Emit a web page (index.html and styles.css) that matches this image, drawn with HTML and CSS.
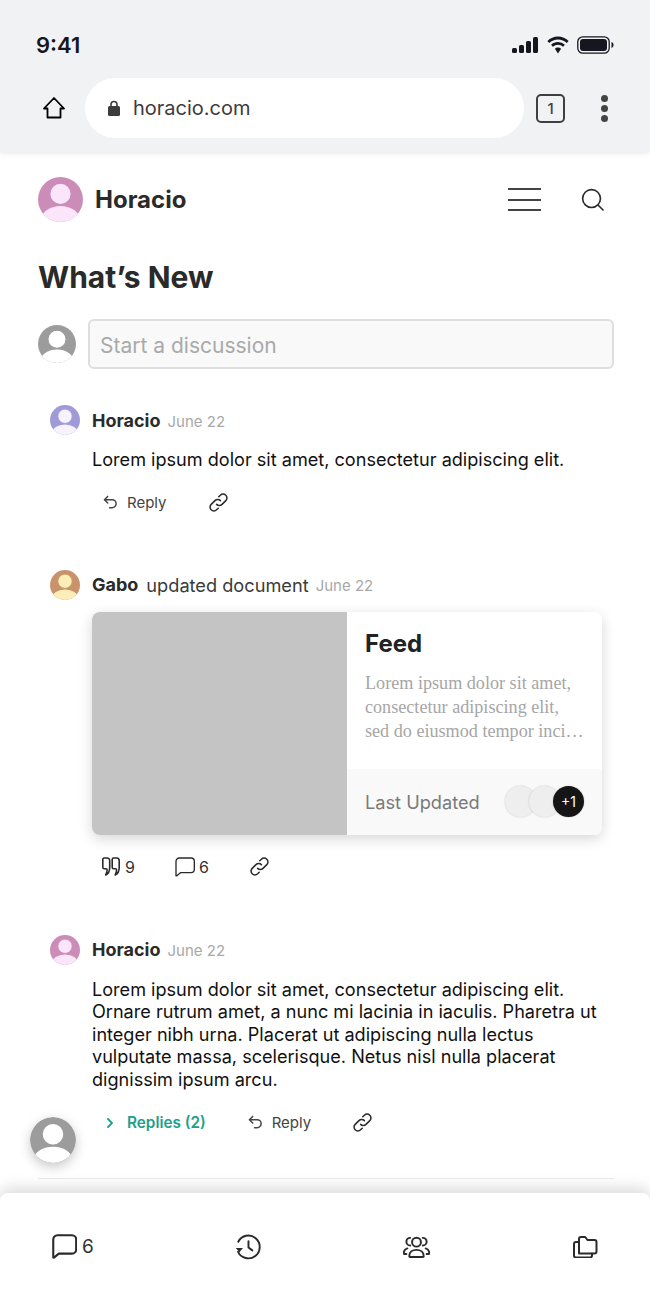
FILE: index.html
```html
<!DOCTYPE html>
<html lang="en">
<head>
    <meta charset="UTF-8">
    <meta name="viewport" content="width=device-width, initial-scale=1.0">
    <title>What's New</title>
    <link rel="stylesheet" href="styles.css">
</head>
<body>
    <svg class="defs" width="0" height="0">
        <defs>
            <clipPath id="avClip"><circle cx="24" cy="24" r="24"/></clipPath>
            <symbol id="avatar" viewBox="0 0 48 48">
                <g clip-path="url(#avClip)">
                    <rect width="48" height="48" style="fill: var(--av-bg)"/>
                    <ellipse cx="24" cy="46" rx="21" ry="15" style="fill: var(--av-fg)"/>
                    <circle cx="24" cy="18" r="11.500" style="fill: var(--av-fg); stroke: var(--av-bg); stroke-width: 1.500"/>
                </g>
            </symbol>
            <symbol id="link" viewBox="0 0 20 20">
                <path d="M8 12a4 4 0 0 0 5.700 0l4-4a4 4 0 0 0-5.700-5.700l-1.700 1.700M12 8a4 4 0 0 0-5.700 0l-4 4a4 4 0 0 0 5.700 5.700l1.700-1.700"/>
            </symbol>
            <symbol id="reply" viewBox="0 0 16 16">
                <path d="M5 1.500 1.500 5 5 8.500M1.500 5h8.200a4.300 4.300 0 0 1 0 8.600H7"/>
            </symbol>
            <symbol id="bubble" viewBox="0 0 24 24">
                <path d="M1.200 22.600V5.200a4 4 0 0 1 4-4h14a4 4 0 0 1 4 4v9.600a4 4 0 0 1-4 4H6.500l-4.600 3.900z"/>
            </symbol>
        </defs>
    </svg>

    <div class="phone">
        <div class="browser">
            <div class="status">
                <span class="time">9:41</span>
                <div class="status-icons">
                    <svg width="27" height="16" viewBox="0 0 27 16" class="solid"><rect x="0" y="11" width="5" height="5" rx="1.500"/><rect x="7" y="8" width="5" height="8" rx="1.500"/><rect x="14" y="4" width="5" height="12" rx="1.500"/><rect x="21" y="0" width="5" height="16" rx="1.500"/></svg>
                    <svg width="24" height="18" viewBox="0 0 24 18" class="solid"><path d="M12 3.400c3.400 0 6.500 1.300 8.800 3.500l1.800-1.900A15.400 15.400 0 0 0 12 .6C8 .6 4.200 2.200 1.400 5l1.800 1.900A12.700 12.700 0 0 1 12 3.400z"/><path d="M12 8.700c2 0 3.800.8 5.100 2l1.800-1.900A10.200 10.200 0 0 0 12 6c-2.700 0-5.100 1-6.900 2.800l1.800 1.900a7.400 7.400 0 0 1 5.100-2z"/><path d="M12 11.500c-1.200 0-2.300.5-3.100 1.200L12 17.500l3.100-4.800a4.500 4.500 0 0 0-3.100-1.200z"/></svg>
                    <svg width="37" height="18" viewBox="0 0 37 18"><rect x=".8" y=".8" width="31.400" height="16.400" rx="5" fill="none" stroke="#16161f" stroke-width="1.300"/><rect x="3" y="3" width="27" height="12" rx="3" fill="#16161f"/><path d="M34.500 6v6c1.300-.4 2-1.600 2-3s-.7-2.600-2-3z" fill="#16161f"/></svg>
                </div>
            </div>
            <div class="urlrow">
                <svg class="home" width="24" height="24" viewBox="0 0 24 24"><path d="M12 2 2 12.500h3.500v9h13v-9H22z"/></svg>
                <div class="urlbar">
                    <svg width="12" height="16" viewBox="0 0 12 16"><path d="M3 7V4.500a3 3 0 0 1 6 0V7" fill="none" stroke="#3c3c3c" stroke-width="1.600"/><rect y="6" width="12" height="10" rx="1.500" fill="#3c3c3c"/></svg>
                    <span>horacio.com</span>
                </div>
                <div class="tabs">1</div>
                <div class="dots"><i></i><i></i><i></i></div>
            </div>
        </div>

        <header class="site-head">
            <svg class="av av-45 pink"><use href="#avatar"/></svg>
            <span class="brand">Horacio</span>
            <div class="burger"><i></i><i></i><i></i></div>
            <svg class="search" width="23" height="23" viewBox="0 0 24 24"><circle cx="11" cy="11" r="9.300"/><path d="m18 18 5 5"/></svg>
        </header>

        <h1>What’s New</h1>

        <div class="composer">
            <svg class="av av-38 grey"><use href="#avatar"/></svg>
            <div class="fake-input">Start a discussion</div>
        </div>

        <div class="post post-one">
            <div class="post-head">
                <svg class="av av-30 purple"><use href="#avatar"/></svg>
                <b>Horacio</b>
                <span class="date">June 22</span>
            </div>
            <p>Lorem ipsum dolor sit amet, consectetur adipiscing elit.</p>
            <div class="actions">
                <span class="act act-reply"><svg class="ico ico-16"><use href="#reply"/></svg>Reply</span>
                <svg class="ico ico-19"><use href="#link"/></svg>
            </div>
        </div>

        <div class="post post-two">
            <div class="post-head">
                <svg class="av av-30 orange"><use href="#avatar"/></svg>
                <b>Gabo</b>
                <span class="did">updated document</span>
                <span class="date">June 22</span>
            </div>
            <div class="card">
                <div class="card-img"></div>
                <div class="card-side">
                    <div class="card-body">
                        <h2>Feed</h2>
                        <div class="excerpt">Lorem ipsum dolor sit amet,<br>consectetur adipiscing elit,<br>sed do eiusmod tempor inci…</div>
                    </div>
                    <div class="card-foot">
                        <span>Last Updated</span>
                        <div class="stack"><i></i><i></i><i class="more">+1</i></div>
                    </div>
                </div>
            </div>
            <div class="actions stats">
                <span class="stat stat-quote">
                    <svg class="ico" width="18" height="19" viewBox="0 0 18 19"><path d="M2.200 1h3a2.500 2.500 0 0 1 2.500 2.500v7c0 3.600-1.300 6.300-4 7.500 1.100-1.900 1.400-3.500 1.400-5.200 0-.8-.4-1.100-1-1.100H2.200a1.400 1.400 0 0 1-1.400-1.400V2.400A1.400 1.400 0 0 1 2.200 1z"/><path d="M11.600 1h3.200a2.500 2.500 0 0 1 2.400 2.500v7c0 3.600-1.300 6.300-4 7.500 1.100-1.900 1.400-3.500 1.400-5.200 0-.8-.4-1.100-1-1.100h-2a1.400 1.400 0 0 1-1.400-1.400V2.400A1.400 1.400 0 0 1 11.600 1z"/></svg>9
                </span>
                <span class="stat stat-bubble"><svg class="ico ico-20"><use href="#bubble"/></svg>6</span>
                <svg class="ico ico-19"><use href="#link"/></svg>
            </div>
        </div>

        <div class="post post-three">
            <div class="post-head">
                <svg class="av av-30 pink"><use href="#avatar"/></svg>
                <b>Horacio</b>
                <span class="date">June 22</span>
            </div>
            <p>Lorem ipsum dolor sit amet, consectetur adipiscing elit. Ornare rutrum amet, a nunc mi lacinia in iaculis. Pharetra ut integer nibh urna. Placerat ut adipiscing nulla lectus vulputate massa, scelerisque. Netus nisl nulla placerat dignissim ipsum arcu.</p>
            <div class="actions">
                <span class="replies">
                    <svg width="6" height="10" viewBox="0 0 6 10"><path d="m1 1 4 4-4 4"/></svg>Replies (2)
                </span>
                <span class="act act-reply"><svg class="ico ico-16"><use href="#reply"/></svg>Reply</span>
                <svg class="ico ico-19"><use href="#link"/></svg>
            </div>
        </div>

        <div class="divider"></div>

        <svg class="av av-46 grey floating"><use href="#avatar"/></svg>

        <nav class="tabbar">
            <span class="tab-count"><svg class="ico ico-25"><use href="#bubble"/></svg>6</span>
            <svg class="ico" width="26" height="26" viewBox="0 0 27 27"><path d="M3.200 18.500A11.800 11.800 0 1 0 3.400 8"/><path d="M.8 14.500h7.500l-3.700 4.500z" class="fill"/><path d="M14 7.500v6.500l4 3"/></svg>
            <svg class="ico" width="27" height="22" viewBox="0 0 28 22"><circle cx="14" cy="6" r="4.600"/><path d="M6.500 20.500c0-4 3-6.500 7.500-6.500s7.500 2.500 7.500 6.500c0 .5-.3.800-.8.800H7.300c-.5 0-.8-.3-.8-.8z"/><path d="M7.500 1.500a4 4 0 0 0 0 8M20.500 1.500a4 4 0 0 1 0 8M4.500 12.500c-2.200.7-3.700 2.400-3.700 5 0 .5.300.8.800.8h1.900M23.500 12.500c2.200.7 3.700 2.400 3.700 5 0 .5-.3.800-.8.800h-1.900"/></svg>
            <svg class="ico" width="25" height="22" viewBox="0 0 25 22"><path d="M6.500 18V3.500a2 2 0 0 1 2-2h4.200l2.300 3h7a2 2 0 0 1 2 2V16a2 2 0 0 1-2 2z" transform="translate(-.5 -.5)"/><path d="M6 6H3a2 2 0 0 0-2 2v11.500a2 2 0 0 0 2 2h14a2 2 0 0 0 2-2V17.500"/></svg>
        </nav>
    </div>
</body>
</html>
```

FILE: styles.css
```css
* {
    box-sizing: border-box;
}
body {
    margin: 0;
    font-family: 'Inter', 'Liberation Sans', sans-serif;
    color: #2a2a2a;
    background: #fff;
}
.defs {
    display: block;
    height: 0;
}
.phone {
    position: relative;
    width: 650px;
    height: 1300px;
    overflow: hidden;
}

/* browser chrome */
.browser {
    height: 152px;
    background: #f1f2f4;
    box-shadow: 0 1px 5px rgba(0,0,0,0.1);
    padding: 30px 36px 0 36px;
}
.status {
    display: flex;
    justify-content: space-between;
    align-items: center;
    height: 30px;
}
.time {
    font-size: 22px;
    font-weight: 600;
    color: #16161f;
}
.status-icons {
    display: flex;
    align-items: center;
    gap: 7px;
}
.solid {
    fill: #16161f;
}
.urlrow {
    display: flex;
    align-items: center;
    height: 60px;
    margin-top: 18px;
}
.home {
    fill: none;
    stroke: #000;
    stroke-width: 1.800;
    stroke-linejoin: round;
    margin: 0 19px 0 6px;
}
.urlbar {
    display: flex;
    align-items: center;
    gap: 13px;
    width: 439px;
    height: 60px;
    padding-left: 23px;
    background: #fff;
    border-radius: 30px;
    font-size: 20px;
    color: #3c3c3c;
}
.tabs {
    width: 29px;
    height: 29px;
    margin-left: 12px;
    border: 2px solid #3f3f3f;
    border-radius: 5px;
    font-size: 15px;
    font-weight: 500;
    line-height: 25px;
    text-align: center;
    color: #3f3f3f;
}
.dots {
    display: flex;
    flex-direction: column;
    gap: 3px;
    margin-left: 36px;
}
.dots i {
    width: 7px;
    height: 7px;
    border-radius: 50%;
    background: #444;
}

/* site header */
.av {
    display: block;
    flex: none;
}
.av-45 { width: 45px; height: 45px; }
.av-38 { width: 38px; height: 38px; }
.av-30 { width: 30px; height: 30px; }
.av-46 { width: 46px; height: 46px; }
.pink { --av-bg: #cb8db7; --av-fg: #fbe5fb; }
.purple { --av-bg: #a09bd8; --av-fg: #f7f2fb; }
.orange { --av-bg: #c8936a; --av-fg: #fdeeb8; }
.grey { --av-bg: #9c9c9c; --av-fg: #fff; }

.site-head {
    display: flex;
    align-items: center;
    height: 45px;
    margin: 25px 46px 0 38px;
}
.brand {
    margin-left: 12px;
    font-size: 24px;
    font-weight: 700;
    flex: 1;
}
.burger {
    display: flex;
    flex-direction: column;
    gap: 8.500px;
    width: 33px;
    margin-right: 40px;
}
.burger i {
    height: 2px;
    background: #444;
}
.search {
    fill: none;
    stroke: #2a2a2a;
    stroke-width: 1.700;
    stroke-linecap: round;
}
h1 {
    margin: 37px 0 0 38px;
    font-size: 30px;
    line-height: 36px;
    font-weight: 700;
}

.composer {
    display: flex;
    align-items: center;
    gap: 12px;
    margin: 24px 36px 0 38px;
}
.fake-input {
    flex: 1;
    height: 50px;
    padding-left: 10px;
    line-height: 49px;
    font-size: 21px;
    color: #a9a9a9;
    background: #f9f9f9;
    border: 2px solid #dedede;
    border-radius: 6px;
}

/* feed */
.post {
    margin-left: 50px;
    margin-right: 36px;
}
.post-one { margin-top: 36px; }
.post-two { margin-top: 55px; }
.post-three { margin-top: 56px; }
.post-head {
    display: flex;
    align-items: center;
    height: 30px;
}
.post-head .av {
    margin-right: 12px;
}
.post-head b {
    font-size: 18px;
    font-weight: 700;
}
.did {
    margin-left: 8px;
    font-size: 18.200px;
    color: #3a3a3a;
}
.date {
    margin-left: 7px;
    padding-top: 2px;
    font-size: 15px;
    color: #a8a8a8;
}
.post p {
    margin: 13px 0 0 42px;
    font-size: 18.100px;
    line-height: 22.600px;
    color: #111;
}
.actions {
    display: flex;
    align-items: center;
    margin: 20px 0 0 42px;
    height: 24px;
    font-size: 15px;
    color: #444;
}
.ico {
    display: block;
    flex: none;
    fill: none;
    stroke: #2a2a2a;
    stroke-width: 1.600;
    stroke-linecap: round;
    stroke-linejoin: round;
}
.ico-16 { width: 15px; height: 15px; stroke: #444; }
.ico-19 { width: 19px; height: 19px; }
.ico-20 { width: 20px; height: 20px; }
.ico-25 { width: 25px; height: 25px; }
.fill { fill: #2a2a2a; stroke: none; }
.act {
    display: flex;
    align-items: center;
    gap: 9px;
}
.act-reply {
    margin-left: 11px;
    margin-right: 42px;
}
.card {
    display: flex;
    height: 223px;
    width: 510px;
    margin: 12px 0 0 42px;
    border-radius: 8px;
    overflow: hidden;
    box-shadow: 0 4px 14px rgba(0,0,0,0.16);
}
.card-img {
    width: 255px;
    background: #c4c4c4;
}
.card-side {
    flex: 1;
    display: flex;
    flex-direction: column;
    background: #fff;
}
.card-body {
    flex: 1;
    padding: 17px 10px 0 18px;
}
h2 {
    margin: 0 0 12px 0;
    font-size: 24px;
    line-height: 30px;
    font-weight: 700;
    color: #222;
}
.excerpt {
    font-family: 'Liberation Serif', serif;
    font-size: 18.150px;
    line-height: 24.300px;
    color: #a6a6a6;
    white-space: nowrap;
}
.card-foot {
    display: flex;
    align-items: center;
    justify-content: space-between;
    height: 66px;
    padding: 0 18px;
    background: #f9f9f9;
    font-size: 18.200px;
    color: #7a7a7a;
}
.stack {
    display: flex;
}
.stack i {
    width: 31px;
    height: 31px;
    margin-left: -7px;
    border-radius: 50%;
    background: #eee;
    box-shadow: 0 0 2px rgba(0,0,0,0.2);
}
.stack .more {
    background: #151515;
    color: #fff;
    font-style: normal;
    font-size: 14px;
    line-height: 31px;
    text-align: center;
}
.stats {
    margin-top: 20px;
    font-size: 16px;
    color: #333;
}
.stat {
    display: flex;
    align-items: center;
}
.stat-quote {
    gap: 5px;
    margin-left: 10px;
    margin-right: 40px;
}
.stat-bubble {
    gap: 4px;
    margin-right: 41px;
}
.replies {
    display: flex;
    align-items: center;
    gap: 14px;
    margin-left: 15px;
    margin-right: 31px;
    font-size: 15.300px;
    font-weight: 600;
    color: #1fa08a;
}
.replies svg {
    fill: none;
    stroke: #1fa08a;
    stroke-width: 1.800;
    stroke-linecap: round;
    stroke-linejoin: round;
}
.replies + .act-reply {
    margin-left: 11px;
    margin-right: 42px;
}
.divider {
    height: 1px;
    margin: 43px 36px 0 38px;
    background: #eaeaea;
}

/* things lying over the feed */
.floating {
    position: absolute;
    left: 30px;
    top: 1117px;
    border-radius: 50%;
    filter: drop-shadow(0 4px 6px rgba(0,0,0,0.22));
}
.tabbar {
    position: absolute;
    left: 0;
    right: 0;
    bottom: 0;
    height: 107px;
    display: flex;
    align-items: center;
    justify-content: space-between;
    padding: 0 52px;
    background: #fff;
    border-radius: 8px 8px 0 0;
    box-shadow: 0 -4px 16px rgba(0,0,0,0.16);
}
.tabbar .ico {
    stroke-width: 2;
}
.tab-count {
    display: flex;
    align-items: center;
    gap: 5px;
    width: 40px;
    font-size: 19px;
    color: #333;
}
```
